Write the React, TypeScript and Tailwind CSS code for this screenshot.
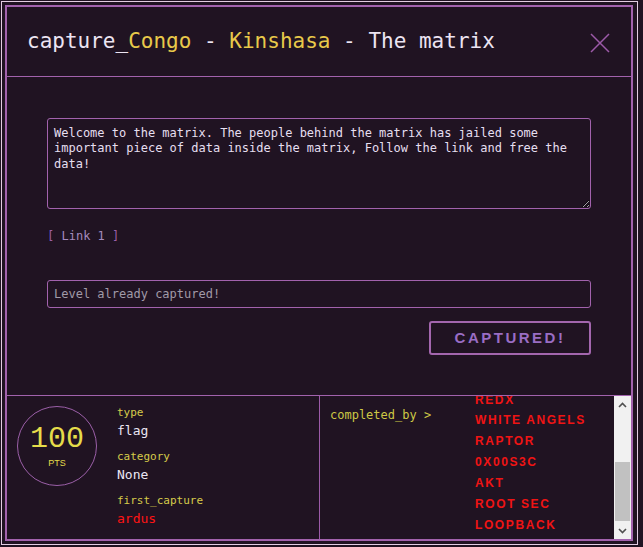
import { useLayoutEffect, useRef } from 'react'

const mono = "font-['DejaVu_Sans_Mono','Liberation_Mono',monospace]"

const teams = ['NULLBYTE', 'CYBER HAWKS', 'SHADOW OPS', 'BLACKLIST', 'KERNEL PANIC', 'REDX', 'WHITE ANGELS', 'RAPTOR', '0X00S3C', 'AKT', 'ROOT SEC', 'LOOPBACK']

function InfoRow({ label, value, valueClass }: { label: string; value: string; valueClass: string }) {
  return (
    <div className="flex flex-col">
      <span className={`${mono} text-[11px] leading-[14px] text-[#d6cb4a]`}>{label}</span>
      <span className={`${mono} text-[13px] leading-[18px] mt-[2px] ${valueClass}`}>{value}</span>
    </div>
  )
}

function ScrollBar() {
  return (
    <div className="w-[17px] h-full shrink-0 bg-[#f1f1f1] flex flex-col">
      <div className="h-[17px] flex items-center justify-center">
        <svg width="9" height="6" viewBox="0 0 9 6">
          <path d="M1 5 L4.5 1.5 L8 5" stroke="#505050" strokeWidth="1.6" fill="none" />
        </svg>
      </div>
      <div className="flex-1 flex flex-col pt-[49px]">
        <div className="h-[59px] mx-[1px] bg-[#c1c1c1]" />
      </div>
      <div className="h-[17px] flex items-center justify-center">
        <svg width="9" height="6" viewBox="0 0 9 6">
          <path d="M1 1 L4.5 4.5 L8 1" stroke="#505050" strokeWidth="1.6" fill="none" />
        </svg>
      </div>
    </div>
  )
}

export default function App() {
  const listRef = useRef<HTMLDivElement>(null)

  // la liste est défilée jusqu'en bas, comme sur la capture
  useLayoutEffect(() => {
    if (listRef.current) listRef.current.scrollTop = listRef.current.scrollHeight
  }, [])

  return (
    <div className="w-[643px] h-[547px] bg-[#201322] pt-[1px] pl-[1px]">
      <div className="w-[637px] h-[544px] border border-[#e2cce2] pt-[3px] pl-[3px]">
        <div className="w-[628px] h-[536px] border-2 border-[#a262ad] flex flex-col">
          {/* header */}
          <div className="h-[70px] shrink-0 border-b border-[#a262ad] flex items-center justify-between pl-[20px] pr-[21px]">
            <h1 className={`${mono} text-[21px] leading-none text-[#ece4f2]`}>
              capture_<span className="text-[#e8c94a]">Congo</span> - <span className="text-[#e8c94a]">Kinshasa</span> - The matrix
            </h1>
            <svg width="20" height="20" viewBox="0 0 20 20" className="mt-[2px]">
              <path d="M1 1 L19 19 M19 1 L1 19" stroke="#9c5aa8" strokeWidth="1.5" fill="none" />
            </svg>
          </div>

          {/* body */}
          <div className="flex-1 flex flex-col px-10 pt-[41px]">
            <textarea
              readOnly
              defaultValue="Welcome to the matrix. The people behind the matrix has jailed some important piece of data inside the matrix, Follow the link and free the data!"
              className={`${mono} [color-scheme:dark] h-[91px] w-full shrink-0 bg-transparent border border-[#a262ad] rounded-[3px] px-[6px] pt-[7px] pb-[5px] text-[12px] leading-[15.3px] text-[#e6dff0] outline-none`}
            />
            <div className={`${mono} mt-[19px] text-[12px] leading-[16px] text-[#9b5fa8]`}>
              [ <span className="text-[#a48abf]">Link 1</span> ]
            </div>
            <input
              readOnly
              placeholder="Level already captured!"
              className={`${mono} mt-[36px] h-[28px] w-full shrink-0 bg-transparent border border-[#a262ad] rounded-[3px] px-[6px] text-[12px] text-[#e6dff0] placeholder:text-[#a19aa8] outline-none`}
            />
            <div className="flex justify-end mt-[13px]">
              <button className="w-[162px] h-[34px] border-2 border-[#a366ae] rounded-[3px] font-['Liberation_Sans',sans-serif] font-bold text-[15px] tracking-[2.5px] text-[#9a6dc4]">
                CAPTURED!
              </button>
            </div>
          </div>

          {/* bottom info */}
          <div className="h-[144px] shrink-0 border-t border-[#a262ad] flex">
            <div className="w-[313px] shrink-0 border-r border-[#9c5aa8] flex pl-[10px] pt-[10px]">
              <div className="w-20 h-20 rounded-full border border-[#9b5fa8] flex flex-col items-center justify-center shrink-0">
                <span className="font-['Liberation_Mono',monospace] text-[30px] leading-[30px] text-[#e5dc4a]">100</span>
                <span className="font-['Liberation_Sans',sans-serif] text-[9px] leading-[12px] mt-[3px] text-[#e5dc4a]">PTS</span>
              </div>
              <div className="flex flex-col gap-[10px] ml-[20px]">
                <InfoRow label="type" value="flag" valueClass="text-[#ebe6f2]" />
                <InfoRow label="category" value="None" valueClass="text-[#ebe6f2]" />
                <InfoRow label="first_capture" value="ardus" valueClass="text-[#ff1414]" />
              </div>
            </div>
            <div className="flex-1 flex min-w-0">
              <div className={`${mono} w-[155px] shrink-0 pl-[10px] pt-[11px] text-[12px] leading-[16px] text-[#cdc845]`}>
                completed_by &gt;
              </div>
              <div ref={listRef} className="flex-1 h-full overflow-hidden pt-[4px] pb-[3px]">
                {teams.map((t) => (
                  <div key={t} className="font-['Liberation_Sans',sans-serif] font-bold text-[12px] leading-[20.9px] tracking-[1.6px] text-[#f01414] whitespace-nowrap">
                    {t}
                  </div>
                ))}
              </div>
              <ScrollBar />
            </div>
          </div>
        </div>
      </div>
    </div>
  )
}
